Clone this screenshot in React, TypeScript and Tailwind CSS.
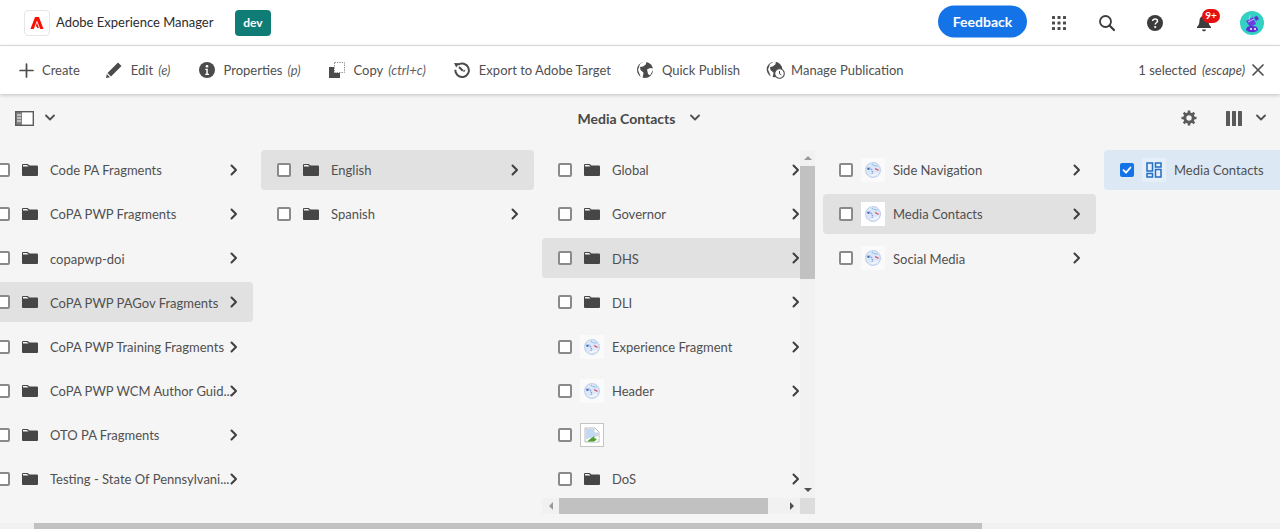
import type { ReactNode } from 'react'

type Kind = 'folder' | 'page' | 'broken'
type Row = { label: string; kind: Kind; active?: boolean; noChevron?: boolean }

const col1: Row[] = [
  { label: 'Code PA Fragments', kind: 'folder' },
  { label: 'CoPA PWP Fragments', kind: 'folder' },
  { label: 'copapwp-doi', kind: 'folder' },
  { label: 'CoPA PWP PAGov Fragments', kind: 'folder', active: true },
  { label: 'CoPA PWP Training Fragments', kind: 'folder' },
  { label: 'CoPA PWP WCM Author Guid...', kind: 'folder' },
  { label: 'OTO PA Fragments', kind: 'folder' },
  { label: 'Testing - State Of Pennsylvani...', kind: 'folder' },
]
const col2: Row[] = [
  { label: 'English', kind: 'folder', active: true },
  { label: 'Spanish', kind: 'folder' },
]
const col3: Row[] = [
  { label: 'Global', kind: 'folder' },
  { label: 'Governor', kind: 'folder' },
  { label: 'DHS', kind: 'folder', active: true },
  { label: 'DLI', kind: 'folder' },
  { label: 'Experience Fragment', kind: 'page' },
  { label: 'Header', kind: 'page' },
  { label: '', kind: 'broken', noChevron: true },
  { label: 'DoS', kind: 'folder' },
]
const col4: Row[] = [
  { label: 'Side Navigation', kind: 'page' },
  { label: 'Media Contacts', kind: 'page', active: true },
  { label: 'Social Media', kind: 'page' },
]

function Folder() {
  return (
    <svg width="18" height="18" viewBox="0 0 18 18" className="text-[#464646]">
      <path fill="currentColor" d="M1 4.200C1 3.500 1.500 3 2.200 3h4c.4 0 .7.100 1 .4L8.600 4.600h7.200c.7 0 1.200.5 1.200 1.200v7.900c0 .7-.5 1.300-1.200 1.300H2.200C1.500 15 1 14.400 1 13.700z" />
      <path fill="#f5f5f5" d="M2 5.400h5.500L6 4.100H2z" />
    </svg>
  )
}

function Globe() {
  return (
    <svg width="18" height="18" viewBox="0 0 18 18" fill="none">
      <circle cx="9" cy="9" r="7.800" fill="#dde7f7" />
      <circle cx="9" cy="9" r="7.400" stroke="#a9c1e8" strokeWidth="1" strokeDasharray="1.600 0.800" />
      <path d="M3 7.500c2-1 3-.5 4 .5s2 3 1 5" stroke="#7fa0d8" strokeWidth="1.400" strokeDasharray="1.500 0.700" />
      <path d="M8 3c1 1.500 3 2 6 2" stroke="#6fb3e0" strokeWidth="1.200" strokeDasharray="1.200 0.800" />
      <path d="M11 7.500l3.500 1.800" stroke="#d2576a" strokeWidth="1.400" />
      <circle cx="4.500" cy="8" r="1.100" fill="#3f68b5" />
      <path d="M7 14c3 .5 5.500-.5 7-2.500" stroke="#f4f7fc" strokeWidth="1.600" />
    </svg>
  )
}

function RowIcon({ kind, active }: { kind: Kind; active?: boolean }) {
  if (kind === 'folder') {
    return (
      <span className="flex h-6 w-6 items-center justify-center">
        <Folder />
      </span>
    )
  }
  if (kind === 'page') {
    return (
      <span className={`flex h-6 w-6 items-center justify-center ${active ? 'bg-white' : 'bg-[#fafafa]'}`}>
        <Globe />
      </span>
    )
  }
  return (
    <span className="flex h-6 w-6 items-center justify-center border border-[#c4c4c4] bg-white">
      <svg width="16" height="16" viewBox="0 0 16 16">
        <path fill="#fff" stroke="#a8a8a8" strokeWidth="0.800" d="M1 1h10l4 4v10H1z" />
        <path fill="#c5d8f2" d="M2 2h8.500v3.500H14V9L2 12z" />
        <path fill="#4ea12f" d="M3 14.500l5-4 3-1.500-1 2 3 1-1 2.500z" />
        <path fill="#fff" d="M10 15l5-5v1.500L12 15z" />
      </svg>
    </span>
  )
}

function Chevron() {
  return (
    <svg width="10" height="12" viewBox="0 0 10 12" className="-ml-[6px] shrink-0 text-[#3f3f3f]">
      <path d="M2.500 1.500L7 6l-4.500 4.500" fill="none" stroke="currentColor" strokeWidth="2" strokeLinecap="round" strokeLinejoin="round" />
    </svg>
  )
}

function Check({ checked }: { checked?: boolean }) {
  if (checked) {
    return (
      <span className="flex h-[14px] w-[14px] shrink-0 items-center justify-center rounded-[2px] bg-[#1473e6]">
        <svg width="10" height="10" viewBox="0 0 10 10">
          <path d="M1.500 5.200l2.500 2.500 4.500-5.200" fill="none" stroke="#fff" strokeWidth="1.800" strokeLinecap="round" strokeLinejoin="round" />
        </svg>
      </span>
    )
  }
  return <span className="h-[14px] w-[14px] shrink-0 rounded-[2px] border-2 border-[#8a8a8a] bg-white" />
}

function ColumnRow({ row }: { row: Row }) {
  return (
    <div className={`flex h-10 w-[273px] shrink-0 items-center rounded pl-4 pr-[14px] ${row.active ? 'bg-[#e1e1e1]' : ''}`}>
      <Check />
      <span className="ml-2 shrink-0">
        <RowIcon kind={row.kind} active={row.active} />
      </span>
      <span className="ml-2 min-w-0 flex-1 translate-y-px truncate text-[13px] text-[#505050]">{row.label}</span>
      {!row.noChevron && <Chevron />}
    </div>
  )
}

function Column({ rows }: { rows: Row[] }) {
  return <div className="flex w-[273px] shrink-0 flex-col gap-[4.14px]">{rows.map((r, i) => <ColumnRow key={i} row={r} />)}</div>
}

function ToolItem({ icon, label, hint, className = 'gap-2' }: { icon: ReactNode; label: string; hint?: string; className?: string }) {
  return (
    <div className={`flex items-center text-[13px] text-[#505050] ${className}`}>
      {icon}
      <span className="translate-y-px whitespace-nowrap">
        {label}
        {hint && <i className="ml-[5px] text-[#5e5e5e]">{hint}</i>}
      </span>
    </div>
  )
}

const ic = 'shrink-0 text-[#4b4b4b]'

function Down({ className = '' }: { className?: string }) {
  return (
    <svg width="10" height="8" viewBox="0 0 10 8" className={`text-[#505050] ${className}`}>
      <path d="M1 1.500l4 4 4-4" fill="none" stroke="currentColor" strokeWidth="1.800" strokeLinecap="round" strokeLinejoin="round" />
    </svg>
  )
}

export default function App() {
  return (
    <div className="flex h-[529px] w-[1280px] flex-col overflow-hidden bg-[#f5f5f5] font-['Lato',sans-serif]">
      {/* shell header */}
      <header className="flex h-[46px] shrink-0 items-center border-b border-[#e1e1e1] bg-white pl-6 pr-4">
        <span className="flex h-[26px] w-[26px] items-center justify-center rounded-[4px] border border-[#e6e6e6]">
          <svg width="14" height="12" viewBox="0 0 24 22">
            <path fill="#fa0f00" d="M8.500 0h7L24 22h-6L12 6.500 6 22H0zM12 10.500l3.600 9.500h-3l-1-2.800H9.500z" />
          </svg>
        </span>
        <span className="ml-[6px] w-[179px] whitespace-nowrap text-[13px] text-[#2c2c2c]">Adobe Experience Manager</span>
        <span className="flex h-[26px] w-9 items-center justify-center rounded-[4px] bg-[#0f7c76] text-[12px] font-bold text-white">dev</span>
        <div className="ml-auto flex items-center">
          <span className="flex h-8 w-[89px] -translate-y-[1.5px] items-center justify-center rounded-full bg-[#1473e6] text-[14px] font-bold text-white">Feedback</span>
          <svg width="16" height="16" viewBox="0 0 16 16" className="ml-6 text-[#4b4b4b]" fill="currentColor">
            {[1, 6.500, 12].flatMap((y) => [1, 6.500, 12].map((x) => <rect key={`${x}-${y}`} x={x} y={y} width="3" height="3" rx="0.500" />))}
          </svg>
          <svg width="18" height="18" viewBox="0 0 18 18" className="ml-[31px] text-[#3c3c3c]" fill="none">
            <circle cx="7.500" cy="7.500" r="5.500" stroke="currentColor" strokeWidth="1.800" />
            <path d="M11.500 11.500L16 16" stroke="currentColor" strokeWidth="2.200" strokeLinecap="round" />
          </svg>
          <svg width="16" height="16" viewBox="0 0 16 16" className="ml-[31px]">
            <circle cx="8" cy="8" r="8" fill="#3c3c3c" />
            <path d="M5.600 6c.2-1.300 1.200-2 2.500-2 1.400 0 2.400.8 2.400 2 0 1.800-2.300 1.700-2.300 3.500" fill="none" stroke="#fff" strokeWidth="1.500" />
            <circle cx="8.200" cy="12" r="1.100" fill="#fff" />
          </svg>
          <span className="relative ml-[33px] flex h-6 w-4 items-center">
            <svg width="16" height="18" viewBox="0 0 16 18" fill="#3c3c3c">
              <path d="M8 1c.7 0 1 .4 1 1 2.300.5 3.500 2.300 3.500 4.800 0 3.200 1 4.700 2.500 6.200v1H1v-1c1.500-1.500 2.500-3 2.500-6.200C3.500 4.300 4.700 2.500 7 2c0-.6.300-1 1-1zM6 15.500h4c0 1-.9 1.800-2 1.800s-2-.8-2-1.800z" />
            </svg>
            <span className="absolute -top-[2px] left-[6px] flex h-[14px] w-[18px] items-center justify-center rounded-full bg-[#e60f0f] text-[10px] font-bold text-white">9+</span>
          </span>
          <svg width="24" height="24" viewBox="0 0 24 24" className="ml-7">
            <circle cx="12" cy="12" r="12" fill="#35d0c4" />
            <path fill="#6a3de0" d="M6 10l7-4 3 7-6 3z" />
            <path fill="#5b2fd6" d="M14 6l3-1 2 3-3 2z" />
            <path fill="#5b2fd6" d="M6 19c0-2.500 2-4 6-4s6 1.500 6 4c-3 3-9 3-12 0z" />
            <circle cx="11" cy="18" r="1" fill="#fff" />
            <circle cx="15" cy="18" r="1" fill="#fff" />
            <path d="M9 9l1-5M8 11l6-3" stroke="#c9bcff" strokeWidth="1" />
          </svg>
        </div>
      </header>

      {/* action bar */}
      <div className="relative z-10 flex h-12 shrink-0 items-center gap-[27px] bg-white pl-[19px] pr-[16px] shadow-[0_1px_4px_rgba(0,0,0,0.22)]">
        <ToolItem
          label="Create"
          icon={
            <svg width="15" height="15" viewBox="0 0 14 14" className={ic}>
              <path d="M7 1v12M1 7h12" stroke="currentColor" strokeWidth="1.600" strokeLinecap="round" />
            </svg>
          }
        />
        <ToolItem
          label="Edit"
          hint="(e)"
          className="-ml-[2px] gap-2"
          icon={
            <svg width="18" height="18" viewBox="0 0 18 18" className={ic} fill="currentColor">
              <path d="M13 1.500l3.500 3.500L6 15.500 2.500 12zM1.800 13l3.200 3.200-4 .8z" />
            </svg>
          }
        />
        <ToolItem
          label="Properties"
          hint="(p)"
          className="ml-[2px] gap-2"
          icon={
            <svg width="16" height="16" viewBox="0 0 16 16" className={ic}>
              <circle cx="8" cy="8" r="8" fill="currentColor" />
              <circle cx="8" cy="4.200" r="1.300" fill="#fff" />
              <path d="M6.300 6.800h2.500v5h1.200v1.200H6.200v-1.200h1.100V8H6.300z" fill="#fff" />
            </svg>
          }
        />
        <ToolItem
          label="Copy"
          hint="(ctrl+c)"
          icon={
            <svg width="18" height="18" viewBox="0 0 18 18" className={ic}>
              <rect x="6.500" y="1.500" width="10" height="10" fill="none" stroke="#8f8f8f" strokeWidth="1" strokeDasharray="1.400 1" />
              <path d="M1 6h5v6h6v5H1z" fill="currentColor" />
            </svg>
          }
        />
        <ToolItem
          label="Export to Adobe Target"
          icon={
            <svg width="18" height="18" viewBox="0 0 18 18" className={ic} fill="none">
              <path d="M5 3.800a6.800 6.800 0 1 1-2.700 5" stroke="currentColor" strokeWidth="2" />
              <path d="M1 2l5.500.3-3.300 4.200z" fill="currentColor" />
              <path d="M6 6l3.800 3.800" stroke="currentColor" strokeWidth="2" />
              <path d="M9.800 9.800l2.700-1.400-1.400 2.800z" fill="currentColor" />
            </svg>
          }
        />
        <ToolItem
          label="Quick Publish"
          className="-ml-[2px] gap-2"
          icon={
            <svg width="18" height="18" viewBox="0 0 18 18" className={ic}>
              <circle cx="9" cy="9" r="8" fill="currentColor" />
              <path fill="#fff" d="M8.500 0h2l-.7 3.500-2.800 2-3 .5.500 3 3 2.500L7 15l-.8 2.500-1-.3L2 9 4 3zM11 8.500l3-1.500 3 .5v1.500l-3 5.500-2-1.500z" />
            </svg>
          }
        />
        <ToolItem
          label="Manage Publication"
          className="-ml-[1px] gap-[6px]"
          icon={
            <svg width="19" height="18" viewBox="0 0 19 18" className={ic}>
              <circle cx="8.500" cy="8.500" r="7.800" fill="currentColor" />
              <path fill="#fff" d="M8 .500h2l-.7 3-2.800 2-2.500.5.500 3 3 2.500-.5 3.500-.8 1.500-1-.3L2 8.500 4 3z" />
              <circle cx="13.500" cy="12.500" r="4.800" fill="#fff" stroke="currentColor" strokeWidth="1.100" />
              <path d="M13.500 10v2.800l1.800 1" fill="none" stroke="currentColor" strokeWidth="1" />
            </svg>
          }
        />
        <div className="ml-auto flex items-center gap-[7px] text-[13px] text-[#505050]">
          <span className="translate-y-px whitespace-nowrap">
            1 selected <i className="ml-[2px]">(escape)</i>
          </span>
          <svg width="12" height="12" viewBox="0 0 12 12" className="text-[#505050]">
            <path d="M1 1l10 10M11 1L1 11" stroke="currentColor" strokeWidth="1.700" strokeLinecap="round" />
          </svg>
        </div>
      </div>

      {/* view bar */}
      <div className="flex h-12 shrink-0 items-center bg-[#f5f5f5] pl-[15px] pr-[14px]">
        <div className="flex flex-1 items-center gap-[11px]">
          <svg width="19" height="15" viewBox="0 0 19 15" className="text-[#5a5a5a]">
            <rect x="0.700" y="0.700" width="17.600" height="13.600" fill="#fff" stroke="currentColor" strokeWidth="1.400" />
            <path d="M1 1h6v13H1z" fill="currentColor" opacity="0.750" />
            <path d="M2 4h4M2 7h4M2 10h4" stroke="#fff" strokeWidth="1" />
          </svg>
          <Down />
        </div>
        <div className="flex items-center gap-[12px]">
          <span className="-translate-x-[3px] whitespace-nowrap text-[14px] font-bold text-[#484848]">Media Contacts</span>
          <Down />
        </div>
        <div className="flex flex-1 items-center justify-end">
          <svg width="16" height="16" viewBox="0 0 16 16" className="text-[#5a5a5a]">
            <circle cx="8" cy="8" r="4.200" fill="none" stroke="currentColor" strokeWidth="3" />
            <path d="M8 .500v3M8 12.500v3M.500 8h3M12.500 8h3M2.700 2.700l2.100 2.100M11.200 11.200l2.100 2.100M13.300 2.700l-2.100 2.100M4.800 11.200l-2.100 2.100" stroke="currentColor" strokeWidth="2.600" />
          </svg>
          <svg width="16" height="15" viewBox="0 0 16 15" className="ml-[29px] text-[#5a5a5a]" fill="currentColor">
            <rect x="0" y="0" width="4" height="15" rx="0.500" />
            <rect x="6" y="0" width="4" height="15" rx="0.500" />
            <rect x="12" y="0" width="4" height="15" rx="0.500" />
          </svg>
          <Down className="ml-[14px]" />
        </div>
      </div>

      {/* column view */}
      <div className="mt-2 flex min-h-0 flex-1 items-start">
        <div className="-ml-5 flex items-start gap-2">
          <Column rows={col1} />
          <Column rows={col2} />
          <div className="flex h-[364px] w-[273px] shrink-0 flex-col overflow-hidden">
            <div className="flex min-h-0 flex-1">
              <div className="w-[258px] shrink-0 overflow-hidden">
                <Column rows={col3} />
              </div>
              <div className="flex w-[15px] flex-col items-center bg-[#f1f1f1]">
                <div className="flex h-4 w-full items-center justify-center">
                  <span className="h-0 w-0 border-x-[4px] border-b-[4px] border-x-transparent border-b-[#9a9a9a]" />
                </div>
                <div className="h-[113px] w-full bg-[#c1c1c1]" />
                <div className="mt-auto flex h-4 w-full items-center justify-center">
                  <span className="h-0 w-0 border-x-[4px] border-t-[4px] border-x-transparent border-t-[#505050]" />
                </div>
              </div>
            </div>
            <div className="flex h-4 shrink-0 items-stretch">
              <div className="flex w-[258px] items-center bg-[#f1f1f1]">
                <span className="flex w-[17px] justify-center">
                  <span className="h-0 w-0 border-y-[4px] border-r-[4px] border-y-transparent border-r-[#9a9a9a]" />
                </span>
                <span className="h-full w-[209px] bg-[#c1c1c1]" />
                <span className="ml-auto flex w-[17px] justify-center">
                  <span className="h-0 w-0 border-y-[4px] border-l-[4px] border-y-transparent border-l-[#505050]" />
                </span>
              </div>
              <div className="w-[15px] bg-[#dcdcdc]" />
            </div>
          </div>
          <Column rows={col4} />
          <div className="w-[273px] shrink-0">
            <div className="flex h-10 items-center rounded bg-[#dde8f5] pl-4">
              <Check checked />
              <span className="ml-2 flex h-6 w-6 items-center justify-center bg-[#e6eef9]">
                <svg width="16" height="16" viewBox="0 0 16 16" fill="none" stroke="#1f6fc4" strokeWidth="1.500">
                  <rect x="1" y="1" width="5.500" height="8" />
                  <rect x="9.500" y="1" width="5.500" height="4" />
                  <rect x="1" y="11.500" width="5.500" height="3.500" />
                  <rect x="9.500" y="7.500" width="5.500" height="7.500" />
                </svg>
              </span>
              <span className="ml-2 translate-y-px truncate text-[13px] text-[#505050]">Media Contacts</span>
            </div>
          </div>
        </div>
      </div>

      {/* page scrollbar */}
      <div className="flex h-[6px] shrink-0 bg-[#f1f1f1]">
        <div className="ml-[34px] h-full w-[948px] bg-[#c1c1c1]" />
      </div>
    </div>
  )
}
